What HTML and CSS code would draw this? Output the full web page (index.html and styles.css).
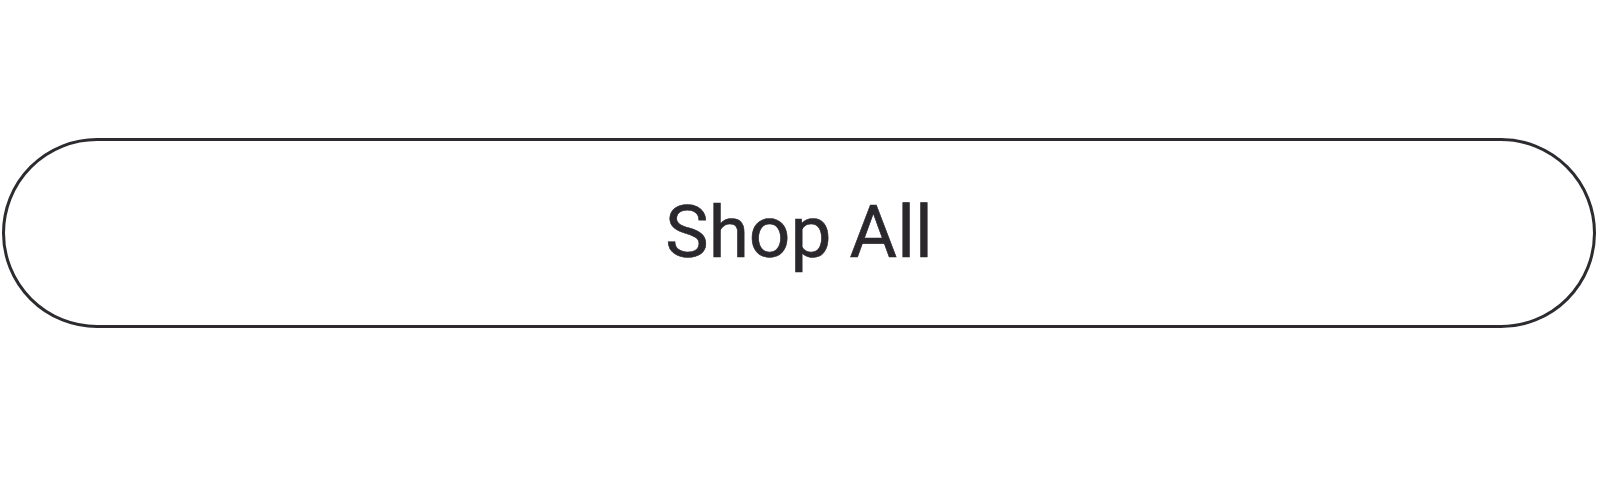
FILE: index.html
```html
<!DOCTYPE html>
<html lang="en">
<head>
    <meta charset="UTF-8">
    <meta name="viewport" content="width=device-width, initial-scale=1.0">
    <title>Shop All</title>
    <link rel="stylesheet" href="styles.css">
</head>
<body>
    <div class="cta-container">
        <a class="shop-all-btn" href="#">Shop All</a>
    </div>
</body>
</html>
```

FILE: styles.css
```css
body {
    font-family: Roboto, "Liberation Sans", Arial, sans-serif;
    margin: 0;
    padding: 0;
    background-color: #ffffff;
}

.cta-container {
    padding: 138px 4px 0 2px;
}

.shop-all-btn {
    display: flex;
    align-items: center;
    justify-content: center;
    box-sizing: border-box;
    height: 190px;
    padding-bottom: 2px;
    border: 3px solid #2e2b30;
    border-radius: 95px;
    color: #2b282d;
    font-size: 73px;
    font-weight: 400;
    -webkit-text-stroke: 0.6px #2b282d;
    text-decoration: none;
}
```
